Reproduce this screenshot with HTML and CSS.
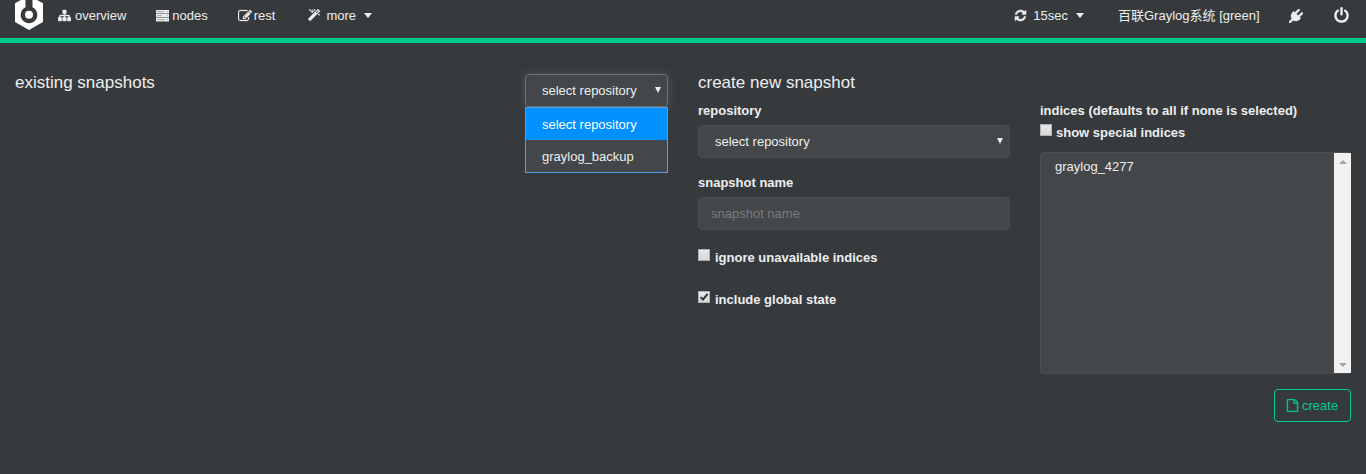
FILE: index.html
```html
<!DOCTYPE html>
<html lang="en">
<head>
<meta charset="utf-8">
<title>cerebro</title>
<link rel="stylesheet" href="styles.css">
</head>
<body>
<nav class="navbar">
  <svg class="logo" viewBox="0 0 28 30"><path d="M6 0H10.5V7.3A8.3 8.3 0 1 0 17.5 7.3V0H22L28 3.3V22L14 30L0 22V3.3Z"/><circle cx="14" cy="14.8" r="4"/></svg>
  <a class="item overview"><svg class="icon" viewBox="0 0 1792 1792"><path d="M1792 1248v320q0 40-28 68t-68 28h-320q-40 0-68-28t-28-68v-320q0-40 28-68t68-28h96v-192h-512v192h96q40 0 68 28t28 68v320q0 40-28 68t-68 28h-320q-40 0-68-28t-28-68v-320q0-40 28-68t68-28h96v-192h-512v192h96q40 0 68 28t28 68v320q0 40-28 68t-68 28h-320q-40 0-68-28t-28-68v-320q0-40 28-68t68-28h96v-192q0-52 38-90t90-38h512v-192h-96q-40 0-68-28t-28-68v-320q0-40 28-68t68-28h320q40 0 68 28t28 68v320q0 40-28 68t-68 28h-96v192h512q52 0 90 38t38 90v192h96q40 0 68 28t28 68z"/></svg><span>overview</span></a>
  <a class="item nodes"><svg class="icon" viewBox="0 0 13 13"><path class="rack" d="M0 1H13V4.4H0ZM0 5H13V8.4H0ZM0 9H13V12.4H0Z"/><path class="slots" d="M1 2.7H8M1 6.7H6M1 10.7H9M11 2.7H12M11 6.7H12M11 10.7H12"/></svg><span>nodes</span></a>
  <a class="item rest"><svg class="icon" viewBox="0 0 1792 1792"><path d="M888 1184l116-116-152-152-116 116v56h96v96h56zm440-720q-16-16-33 1l-350 350q-17 17-1 33t33-1l350-350q17-17 1-33zm80 594v190q0 119-84.5 203.5t-203.5 84.5h-832q-119 0-203.5-84.5t-84.5-203.5v-832q0-119 84.5-203.5t203.5-84.5h832q63 0 117 25 15 7 18 23 3 17-9 29l-49 49q-14 14-32 8-23-6-45-6h-832q-66 0-113 47t-47 113v832q0 66 47 113t113 47h832q66 0 113-47t47-113v-126q0-13 9-22l64-64q15-15 35-7t20 29zm-96-738l288 288-672 672h-288v-288zm444 132l-92 92-288-288 92-92q28-28 68-28t68 28l152 152q28 28 28 68t-28 68z"/></svg><span>rest</span></a>
  <a class="item more"><svg class="icon" viewBox="0 0 1792 1792"><path d="M1190 581l293-293-107-107-293 293zm447-293q0 27-18 45l-1286 1286q-18 18-45 18t-45-18l-198-198q-18-18-18-45t18-45l1286-1286q18-18 45-18t45 18l198 198q18 18 18 45zm-1351-190l98 30-98 30-30 98-30-98-98-30 98-30 30-98zm350 162l196 60-196 60-60 196-60-196-196-60 196-60 60-196zm930 478l98 30-98 30-30 98-30-98-98-30 98-30 30-98zm-640-640l98 30-98 30-30 98-30-98-98-30 98-30 30-98z"/></svg><span>more</span><i class="caret"></i></a>
  <a class="item interval"><svg class="icon" viewBox="0 0 1792 1792"><path d="M1639 1056q0 5-1 7-64 268-268 434.5t-478 166.5q-146 0-282.5-55t-243.5-157l-129 129q-19 19-45 19t-45-19-19-45v-448q0-26 19-45t45-19h448q26 0 45 19t19 45-19 45l-137 137q71 66 161 102t187 36q134 0 250-65t186-179q11-17 53-117 8-23 30-23h192q13 0 22.5 9.5t9.5 22.5zm25-800v448q0 26-19 45t-45 19h-448q-26 0-45-19t-19-45 19-45l138-138q-148-137-349-137-134 0-250 65t-186 179q-11 17-53 117-8 23-30 23h-199q-13 0-22.5-9.5t-9.5-22.5v-7q65-268 270-434.5t480-166.5q146 0 284 55.5t245 156.5l130-129q19-19 45-19t45 19 19 45z"/></svg><span>15sec</span><i class="caret"></i></a>
  <a class="item cluster"><span>百联Graylog系统 [green]</span></a>
  <a class="item connect"><svg class="icon" viewBox="0 0 1792 1792"><path d="M1755 453q37 38 37 90.5t-37 90.5l-401 400 150 150-160 160q-163 163-389.5 186.5t-411.5-100.5l-362 362h-181v-181l362-362q-124-185-100.5-411.5t186.5-389.5l160-160 150 150 400-401q38-37 91-37t90 37 37 90.5-37 90.5l-400 401 234 234 401-400q38-37 91-37t90 37z"/></svg></a>
  <a class="item logout"><svg class="icon power" viewBox="0 0 1792 1792"><path d="M1664 896q0 156-61 298t-164 245-245 164-298 61-298-61-245-164-164-245-61-298q0-182 80.5-343t226.5-270q43-32 95.5-25t83.5 50q32 42 24.5 94.5t-49.5 84.5q-98 74-151.5 181t-53.5 228q0 104 40.5 198.5t109.5 163.5 163.5 109.5 198.5 40.5 198.5-40.5 163.5-109.5 109.5-163.5 40.5-198.5q0-121-53.5-228t-151.5-181q-42-32-49.5-84.5t24.5-94.5q31-43 84-50t95 25q146 109 226.5 270t80.5 343zm-640-768v640q0 52-38 90t-90 38-90-38-38-90v-640q0-52 38-90t90-38 90 38 38 90z"/></svg></a>
</nav>
<main class="page">
  <section class="existing">
    <h4 class="title">existing snapshots</h4>
    <div class="picker">
      <div class="control select focused"><span>select repository</span><i class="arrow"></i></div>
      <ul class="menu">
        <li class="option active">select repository</li>
        <li class="option">graylog_backup</li>
      </ul>
    </div>
  </section>
  <section class="create">
    <h4 class="title">create new snapshot</h4>
    <div class="columns">
      <form class="form">
        <label class="label">repository</label>
        <div class="control select"><span>select repository</span><i class="arrow"></i></div>
        <label class="label name-label">snapshot name</label>
        <input class="control text" placeholder="snapshot name">
        <label class="check ignore"><i class="box"></i><span>ignore unavailable indices</span></label>
        <label class="check global"><i class="box"><svg class="tick" viewBox="0 0 12 12"><path d="M2.6 6.1L5 8.6L9.6 2.8"/></svg></i><span>include global state</span></label>
      </form>
      <div class="indices">
        <label class="label">indices (defaults to all if none is selected)</label>
        <label class="check special"><i class="box"></i><span>show special indices</span></label>
        <div class="list">
          <div class="entries">graylog_4277</div>
          <div class="scrollbar"><i class="up"></i><i class="down"></i></div>
        </div>
        <button class="button"><svg class="icon" viewBox="0 0 1792 1792"><path d="M1596 380q28 28 48 76t20 88v1152q0 40-28 68t-68 28h-1344q-40 0-68-28t-28-68v-1600q0-40 28-68t68-28h896q40 0 88 20t76 48zm-444-244v376h376q-10-29-22-41l-313-313q-12-12-41-22zm384 1528v-1024h-416q-40 0-68-28t-28-68v-416h-768v1536h1280z"/></svg><span>create</span></button>
      </div>
    </div>
  </section>
</main>
</body>
</html>
```
FILE: styles.css
```css
* { box-sizing: border-box; }
body {
  margin: 0;
  height: 474px;
  overflow: hidden;
  background: #373a3c;
  color: #eceeef;
  font: 13px/18px "Liberation Sans", "Noto Sans CJK SC", sans-serif;
}
.navbar {
  display: flex;
  height: 43px;
  padding-left: 15px;
  border-bottom: 5px solid #00cc8f;
}
.logo { width: 28px; height: 30px; fill: #fff; }
.item { display: flex; align-items: center; height: 31px; white-space: nowrap; }
.icon { flex: none; width: 13px; height: 13px; margin-right: 4px; fill: currentColor; stroke: currentColor; stroke-width: 60; }
.overview { margin-left: 15px; }
.nodes { margin-left: 30px; }
.nodes .icon { width: 13px; margin-right: 3px; }
.rack { stroke: none; }
.slots { fill: none; stroke: #8b8e90; stroke-width: .8; }
.rest { margin-left: 30px; }
.rest .icon { width: 14px; height: 14px; margin-right: 2px; stroke-width: 30; }
.more { margin-left: 33px; }
.more .icon { margin-right: 5px; }
.caret { margin-left: 8px; border: 4.5px solid transparent; border-top: 5px solid; border-bottom: 0; border-left-color: transparent; border-right-color: transparent; }
.interval { margin-left: auto; }
.interval .icon { margin-right: 6px; }
.cluster { width: 142px; margin-left: 34px; }
.connect { margin-left: 29px; }
.connect .icon { width: 14px; height: 14px; margin: 0; }
.logout { margin: 0 16px 0 30px; }
.logout .power { width: 17px; height: 17px; margin: 0; stroke: none; }
.page { display: flex; gap: 30px; padding: 31px 15px 0; }
.existing { display: flex; justify-content: space-between; width: 653px; }
.create { flex: 1; }
.title { margin: 0; font-size: 17px; font-weight: 400; line-height: 18px; }
.picker { position: relative; width: 143px; }
.control {
  width: 100%;
  height: 33px;
  border: 1px solid #4b4f52;
  border-radius: 4px;
  background: #434749;
  color: #eceeef;
  font: inherit;
}
.select { display: flex; align-items: center; justify-content: space-between; padding: 0 6px 0 16px; }
.focused { border-color: #6d7174; box-shadow: 0 0 8px rgba(110, 115, 118, .5); }
.arrow { margin-top: -2px; border: 3px solid transparent; border-top: 6px solid #eceeef; border-bottom: 0; }
.menu {
  position: absolute;
  top: 33px;
  left: 0;
  width: 143px;
  height: 66px;
  margin: 0;
  padding: 0;
  border: 1px solid #569de5;
  background: #434749;
  list-style: none;
}
.option { height: 32px; padding-left: 16px; line-height: 34px; }
.active { background: #0090ff; color: #fff; }
.columns { display: grid; grid-template-columns: 312px 311px; gap: 30px; padding-top: 10px; }
.label { display: block; font-weight: 700; line-height: 18px; }
.form .control { margin-top: 5px; }
.form .name-label { margin-top: 16px; }
.text { display: block; padding: 0 12px; }
.text::placeholder { color: #787c7f; opacity: 1; }
.check { display: flex; align-items: center; gap: 5px; height: 18px; font-weight: 700; }
.box {
  width: 12px;
  height: 12px;
  margin-top: -6px;
  border: 1px solid #b0b0b0;
  background: linear-gradient(#e9e9e9, #d9d9d9);
}
.tick { display: block; width: 12px; height: 12px; margin: -1px; fill: none; stroke: #333; stroke-width: 2; }
.ignore { margin-top: 19px; }
.global { margin-top: 24px; }
.special { margin-top: 4px; gap: 4px; }
.list {
  display: flex;
  height: 222px;
  margin-top: 10px;
  border: 1px solid #4b4f52;
  border-right: 0;
  border-radius: 4px;
  background: #434749;
}
.entries { flex: 1; padding: 5px 14px; }
.scrollbar {
  display: flex;
  flex-direction: column;
  justify-content: space-between;
  align-items: center;
  width: 17px;
  padding: 7px 0 6px;
  background: #f1f1f1;
}
.up, .down { border: 4px solid transparent; }
.up { border-top: 0; border-bottom-color: #a3a3a3; }
.down { border-bottom: 0; border-top-color: #a3a3a3; }
.button {
  display: flex;
  align-items: center;
  width: 77px;
  height: 33px;
  margin: 15px 0 0 auto;
  padding: 0 0 0 11px;
  border: 1px solid #00cc8f;
  border-radius: 4px;
  background: transparent;
  color: #00cc8f;
  font: inherit;
}
.button .icon { margin-right: 3px; }
```
